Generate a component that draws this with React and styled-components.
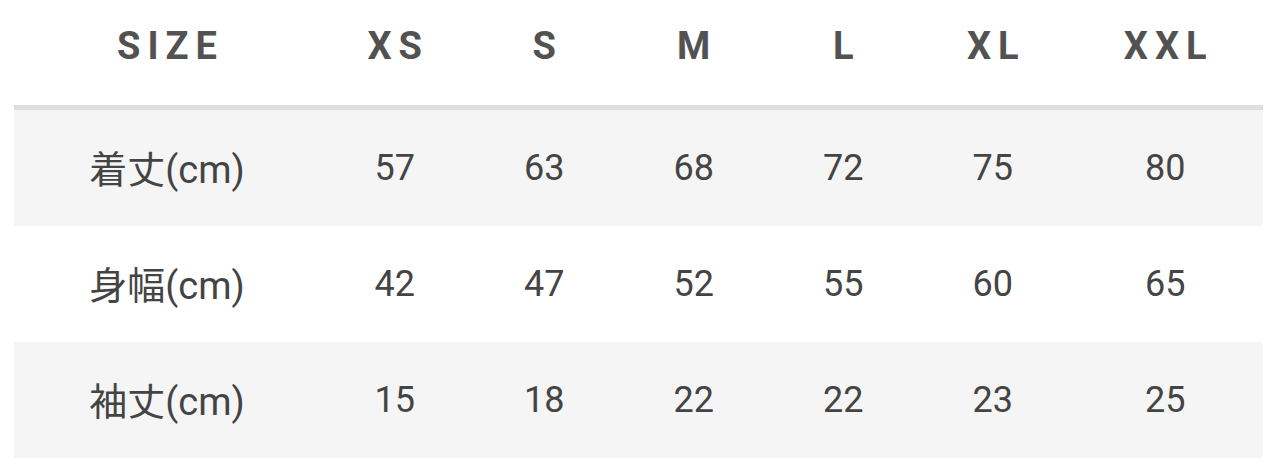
import React from 'react'
import styled, { createGlobalStyle } from 'styled-components'

const sizes = ['XS', 'S', 'M', 'L', 'XL', 'XXL']

const rows = [
  { label: '着丈(cm)', values: [57, 63, 68, 72, 75, 80] },
  { label: '身幅(cm)', values: [42, 47, 52, 55, 60, 65] },
  { label: '袖丈(cm)', values: [15, 18, 22, 22, 23, 25] },
]

const GlobalStyle = createGlobalStyle`
  body {
    margin: 0;
    background: #fff;
    font-family: Roboto, "Noto Sans CJK JP", "Liberation Sans", sans-serif;
  }
`

export default function App () {
  return (
    <Page>
      <GlobalStyle />
      <Table>
        <HeaderRow>
          <HeadCell>SIZE</HeadCell>
          {sizes.map(s => <HeadCell key={s}>{s}</HeadCell>)}
        </HeaderRow>
        {rows.map((row, i) => (
          <Row key={row.label} $striped={i % 2 === 0}>
            <LabelCell>{row.label}</LabelCell>
            {row.values.map((v, j) => <Cell key={j}>{v}</Cell>)}
          </Row>
        ))}
      </Table>
    </Page>
  )
}

const Page = styled.div`
  padding: 0 17px 0 14px;
  height: 474px;
  box-sizing: border-box;
`

const columns = '306px repeat(5, 149.5px) 1fr'

const Table = styled.div`
  display: flex;
  flex-direction: column;
`

const HeaderRow = styled.div`
  display: grid;
  grid-template-columns: ${columns};
  align-items: center;
  height: 92px;
  padding-bottom: 13px;
  border-bottom: 5px solid #dedede;
`

const HeadCell = styled.div`
  text-align: center;
  font-size: 38px;
  font-weight: 700;
  letter-spacing: 7px;
  text-indent: 7px;
  color: #525252;
`

const Row = styled.div`
  display: grid;
  grid-template-columns: ${columns};
  align-items: center;
  height: 116px;
  background: ${p => p.$striped ? '#f5f5f5' : '#fff'};
`

const Cell = styled.div`
  text-align: center;
  font-size: 36px;
  color: #444;
`

const LabelCell = styled(Cell)`
  font-size: 38px;
  margin-top: -4px;
`
